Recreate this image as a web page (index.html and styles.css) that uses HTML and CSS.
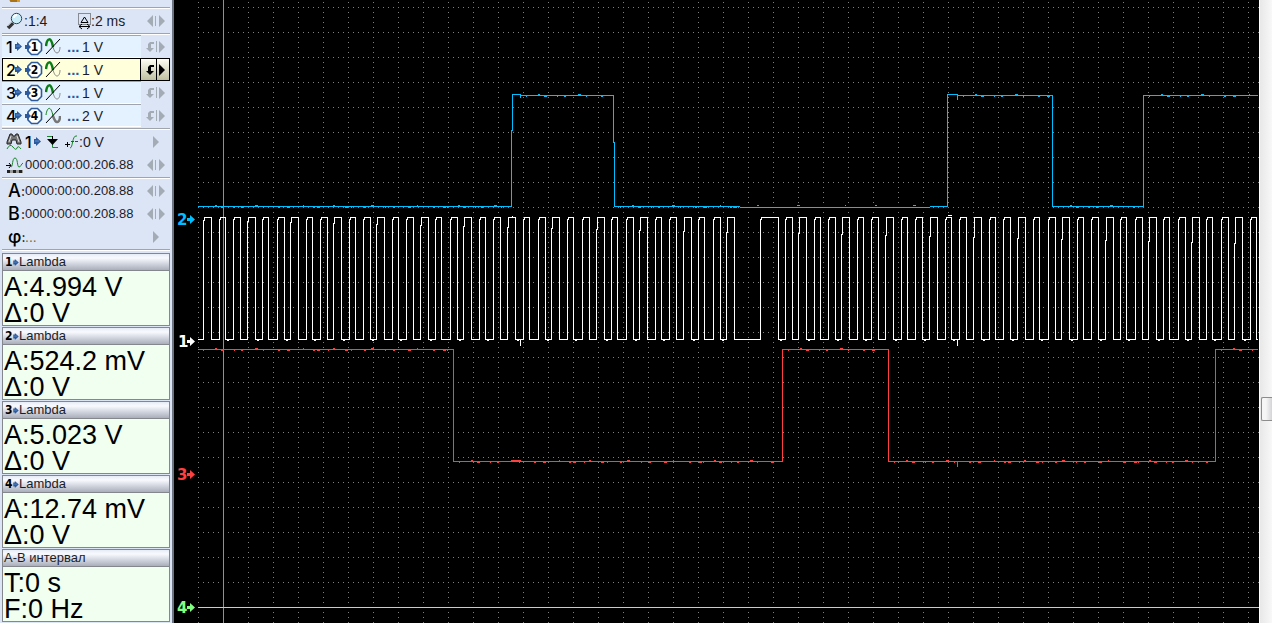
FILE: index.html
```html
<!DOCTYPE html>
<html lang="ru">
<head>
<meta charset="utf-8">
<title>Осциллограф</title>
<link rel="stylesheet" href="styles.css">
</head>
<body>
<svg class="defs" aria-hidden="true">
  <symbol id="arrow" viewBox="0 0 7 9"><path d="M0 2h2V0l5 4.500-5 4.500V7H0z" fill="#2c5a9c"/><path d="M1 4h4" stroke="#5d8fcf"/></symbol>
  <symbol id="octagon" viewBox="0 0 18 18"><path d="M6.500 1.500h6l4 4v7l-4 4h-6L3 13V5z" fill="#fff" stroke="#2c5a9c" stroke-width="1.600"/><path d="M0 7h2V5l4 4-4 4v-2H0z" fill="#2c5a9c"/></symbol>
  <symbol id="wave-top" viewBox="0 0 16 17"><path d="M8 9c1 3 2 6 4 6s3-3 3-6" fill="none" stroke="#8a8a8a"/><path d="M1 8c1-8 5-10 7 1" fill="none" stroke="#0a7d14" stroke-width="2.500"/><path d="M1 16L15 1" stroke="#000"/></symbol>
  <symbol id="wave-bottom" viewBox="0 0 16 17"><path d="M8 9c1 3 2 6 4 6s3-3 3-6" fill="none" stroke="#777" stroke-width="2.500"/><path d="M1 8c1-8 5-10 7 1" fill="none" stroke="#0a7d14"/><path d="M1 16L15 1" stroke="#000"/></symbol>
  <symbol id="pair" viewBox="0 0 20 12"><path d="M7 0v12L1 6zM13 0v12l6-6z" fill="#a3abb5"/><path d="M10 1v10" stroke="#a3abb5" stroke-width="2"/><path d="M10.500 1v10" stroke="#dce5f5"/></symbol>
  <symbol id="single" viewBox="0 0 20 12"><path d="M7 0v12l6-6z" fill="#a3abb5"/></symbol>
  <symbol id="drop" viewBox="0 0 8 12"><path d="M8 1v2H5v4h3l-4 4-4-4h2V3l2-2z" fill="currentColor"/></symbol>
  <symbol id="right" viewBox="0 0 7 12"><path d="M0 0v12l6-6z" fill="currentColor"/></symbol>
</svg>
<main class="app">
  <aside class="panel">
    <div class="strip"><svg width="14" height="3"><path d="M0 0h11v2H2z" fill="#d99b25"/><path d="M1 1h7" stroke="#7b4a08"/></svg></div>
    <hr>
    <div class="row">
      <svg width="18" height="18"><path d="M7 11L2 16" stroke="#333" stroke-width="3.500"/><path d="M6 10l-4 4" stroke="#aaa"/><circle cx="10.500" cy="6.500" r="5.200" fill="#c9eefa" stroke="#345" /><path d="M8 6c0-2 1-3 3-3" fill="none" stroke="#fff" stroke-width="2"/></svg>
      <span class="value scale">:1:4</span>
      <svg width="13" height="16"><rect x=".5" y=".5" width="12" height="11" fill="none" stroke="#333" stroke-dasharray="1 1"/><path d="M3 9.500h7L6.500 4z" fill="none" stroke="#000"/><path d="M1 13.500h11M4 11l-3 2.500L4 16M9 11l3 2.500L9 16" fill="none" stroke="#000"/></svg>
      <span class="value">:2 ms</span>
      <button class="step" aria-label="Развёртка"><svg width="20" height="12"><use href="#pair"/></svg></button>
    </div>
    <hr>
    <div class="channels">
      <div class="channel"><div class="info"><b>1</b><svg width="7" height="9"><use href="#arrow"/></svg><svg class="oct" width="18" height="18"><use href="#octagon"/><text x="9.500" y="13">1</text></svg><svg class="wave" width="16" height="17"><use href="#wave-top"/></svg><i>...</i><span class="value">1 V</span></div><button class="split" aria-label="Канал 1"><svg width="8" height="12"><use href="#drop"/></svg><span></span><svg width="7" height="12"><use href="#right"/></svg></button></div>
      <div class="channel selected"><div class="info"><b>2</b><svg width="7" height="9"><use href="#arrow"/></svg><svg class="oct" width="18" height="18"><use href="#octagon"/><text x="9.500" y="13">2</text></svg><svg class="wave" width="16" height="17"><use href="#wave-top"/></svg><i>...</i><span class="value">1 V</span></div><button class="split" aria-label="Канал 2"><svg width="8" height="12"><use href="#drop"/></svg><span></span><svg width="7" height="12"><use href="#right"/></svg></button></div>
      <div class="channel"><div class="info"><b>3</b><svg width="7" height="9"><use href="#arrow"/></svg><svg class="oct" width="18" height="18"><use href="#octagon"/><text x="9.500" y="13">3</text></svg><svg class="wave" width="16" height="17"><use href="#wave-top"/></svg><i>...</i><span class="value">1 V</span></div><button class="split" aria-label="Канал 3"><svg width="8" height="12"><use href="#drop"/></svg><span></span><svg width="7" height="12"><use href="#right"/></svg></button></div>
      <div class="channel"><div class="info"><b>4</b><svg width="7" height="9"><use href="#arrow"/></svg><svg class="oct" width="18" height="18"><use href="#octagon"/><text x="9.500" y="13">4</text></svg><svg class="wave" width="16" height="17"><use href="#wave-bottom"/></svg><i>...</i><span class="value">2 V</span></div><button class="split" aria-label="Канал 4"><svg width="8" height="12"><use href="#drop"/></svg><span></span><svg width="7" height="12"><use href="#right"/></svg></button></div>
    </div>
    <hr>
    <div class="row">
      <svg width="18" height="18"><path d="M4 1h2l1 2h2l1-2h2l3 8v2h-4l-1-4H6l-1 4H1V9z" fill="#777" stroke="#222"/><path d="M5 3L3 9M11 3l2 6" stroke="#ddd"/><path d="M1 16q3-6 6-2t4 1 4 1" fill="none" stroke="#18892a"/></svg>
      <b class="source">1</b><svg width="7" height="9"><use href="#arrow"/></svg>
      <svg class="edge" width="12" height="14"><path d="M0 1.500h5.500v11H11" fill="none" stroke="#18892a"/><path d="M0 4h11L5.500 10z" fill="#000"/><path d="M5.500 1v6" stroke="#000"/></svg>
      <svg class="level" width="14" height="16"><path d="M0 10.500h5M2.500 8v5" stroke="#000"/><path d="M5 14c3 0 2-12 6-12h1" fill="none" stroke="#18892a"/><path d="M6 7.500h8" stroke="#444" stroke-dasharray="3 1"/></svg>
      <span class="value">:0 V</span>
      <button class="step" aria-label="Уровень"><svg width="20" height="12"><use href="#single"/></svg></button>
    </div>
    <div class="row">
      <svg class="pos" width="18" height="18"><path d="M0 9.500h5M3 7l2 2.500L3 12" fill="none" stroke="#000"/><path d="M5 11c2 0 1-9 4-9s2 9 4 9 2-3 4-4" fill="none" stroke="#18892a"/><path d="M1 15.500h16" stroke="#999" stroke-width="3"/><path d="M1 15.500h16" stroke="#222" stroke-width="3" stroke-dasharray="3 3"/></svg>
      <span class="value time">0000:00:00.206.88</span>
      <button class="step" aria-label="Позиция"><svg width="20" height="12"><use href="#pair"/></svg></button>
    </div>
    <hr>
    <div class="row"><b class="name">A<small>:</small></b><span class="value time">0000:00:00.208.88</span><button class="step" aria-label="Курсор A"><svg width="20" height="12"><use href="#pair"/></svg></button></div>
    <div class="row"><b class="name">B<small>:</small></b><span class="value time">0000:00:00.208.88</span><button class="step" aria-label="Курсор B"><svg width="20" height="12"><use href="#pair"/></svg></button></div>
    <div class="row"><b class="name">φ<small>:</small></b><span class="value dots">...</span><button class="step" aria-label="Фаза"><svg width="20" height="12"><use href="#single"/></svg></button></div>
    <hr>
    <section class="card"><h2><b>1</b><svg width="6" height="7"><use href="#arrow"/></svg>Lambda</h2><p>A:4.994 V</p><p>Δ:0 V</p></section>
    <section class="card"><h2><b>2</b><svg width="6" height="7"><use href="#arrow"/></svg>Lambda</h2><p>A:524.2 mV</p><p>Δ:0 V</p></section>
    <section class="card"><h2><b>3</b><svg width="6" height="7"><use href="#arrow"/></svg>Lambda</h2><p>A:5.023 V</p><p>Δ:0 V</p></section>
    <section class="card"><h2><b>4</b><svg width="6" height="7"><use href="#arrow"/></svg>Lambda</h2><p>A:12.74 mV</p><p>Δ:0 V</p></section>
    <section class="card"><h2>А-В интервал</h2><p>T:0 s</p><p>F:0 Hz</p></section>
  </aside>
  <svg class="plot" viewBox="174 0 1085 623" preserveAspectRatio="xMinYMin slice">
    <defs>
      <pattern id="grid" x="198" y="7" width="25" height="25" patternUnits="userSpaceOnUse">
        <path d="M0 .5h1m4 0h1m4 0h1m4 0h1m4 0h1M0 5.500h1M0 10.500h1M0 15.500h1M0 20.500h1" stroke="#808080"/>
      </pattern>
    </defs>
    <rect x="198" y="0" width="1061" height="623" fill="url(#grid)"/>
    <g class="traces">
      <path d="M223.500 0V623" stroke="#a89c10"/>
      <path d="M223.500 0V623" stroke="#909090" stroke-dasharray="1 4" stroke-dashoffset="-2"/>
      <path id="ch1" stroke="#fff"/>
      <path id="ch2" stroke="#00bfff"/>
      <path id="ch3" stroke="#ff4040"/>
      <path d="M198 607.500H1259" stroke="#80ff80"/>
    </g>
    <g class="marker" fill="#00bfff"><text x="177" y="225">2</text><path d="M187 218h3v-3l5 4.500-5 4.500v-3h-3z"/></g>
    <g class="marker" fill="#fff"><text x="178" y="347">1</text><path d="M187 340h3v-3l5 4.500-5 4.500v-3h-3z"/></g>
    <g class="marker" fill="#ff4040"><text x="177" y="480">3</text><path d="M187 473h3v-3l5 4.500-5 4.500v-3h-3z"/></g>
    <g class="marker" fill="#80ff80"><text x="177" y="613">4</text><path d="M187 606h3v-3l5 4.500-5 4.500v-3h-3z"/></g>
  </svg>
  <div class="scroll"><div class="thumb"></div></div>
</main>
<script src="traces.js"></script>
</body>
</html>
```
FILE: styles.css
```css
* { box-sizing: border-box; }
body {
  margin: 0;
  background: #000;
  color: #000;
  font-family: "Liberation Sans", Arial, sans-serif;
}
svg { display: block; flex: none; overflow: visible; }
.defs { position: absolute; width: 0; height: 0; }
.app { display: flex; min-height: 100vh; }

.panel {
  flex: none;
  width: 174px;
  padding: 0 2px;
  background: #dce5f5;
  border-right: 2px solid #6e7684;
}
.strip { height: 7px; padding-left: 7px; }
hr {
  height: 2px;
  margin: 0;
  border: 0;
  border-top: 1px solid #a0a4ac;
  background: #fff;
}
.row + hr, .channels + hr { margin-top: 1px; }
.row { display: flex; align-items: center; height: 23px; padding-left: 4px; }
.value {
  font-size: 14px;
  line-height: 20px;
  color: #1c1c28;
  white-space: pre;
}
.time { font-size: 13px; }
.scale { width: 54px; }
button { margin: 0; padding: 0; border: 0; background: none; color: #a3abb5; }
.step { margin-left: auto; margin-right: 4px; }
.source { width: 9px; margin-left: 1px; font: 500 16px/20px Inter, sans-serif; }
.edge { margin-left: 6px; }
.level { margin-left: 6px; }
.pos { margin-right: 1px; }
.name {
  display: flex;
  justify-content: space-between;
  width: 19px;
  padding-left: 2px;
  font: 500 18px/20px Inter, sans-serif;
}
.name small { width: 4px; font-size: 13px; line-height: 20px; }
.dots { color: #7c6a35; }

.channel { display: flex; height: 23px; }
.info {
  display: flex;
  align-items: center;
  width: 139px;
  padding-left: 4px;
  border-top: 1px solid #a0a4ac;
  border-bottom: 1px solid #fff;
  background: #e4f2ff;
}
.info b { width: 9px; font: 500 16px/20px Inter, sans-serif; }
.oct { margin-left: 3px; }
.oct text { font: bold 12px "DejaVu Sans Condensed", "DejaVu Sans", sans-serif; text-anchor: middle; }
.wave { margin-left: 2px; }
.info i { width: 15px; margin-left: 6px; font: bold 15px/20px "Liberation Sans", sans-serif; color: #2c5a9c; }
.split { display: flex; align-items: center; gap: 2px; width: 29px; padding-left: 5px; }
.split span { width: 1px; height: 11px; background: currentColor; }
.selected .info { border: 1px solid #000; padding-left: 3px; background: #ffffdc; }
.selected .split {
  border: 1px solid #000;
  border-left-width: 0;
  color: #000;
  background: linear-gradient(#fffff4, #c0c0a0);
}
.selected .split span { height: 100%; }

.card {
  margin-bottom: 1px;
  width: 168px;
  height: 73px;
  border: 1px solid #84878c;
  background: #f0fff0;
}
hr + .card { margin-top: 2px; }
.card h2 {
  display: flex;
  align-items: center;
  height: 17px;
  margin: 0 0 3px;
  padding-left: 1px;
  border-bottom: 1px solid #84878c;
  background: linear-gradient(#e6ebf4, #f8faff 25%, #a8aebb);
  font-size: 13px;
  font-weight: normal;
  line-height: 16px;
  color: #1c1c28;
}
.card h2 b { width: 9px; padding-left: 1px; font: bold 12px/16px "DejaVu Sans Condensed", "DejaVu Sans", sans-serif; color: #000; }
.card p { margin: 0; padding-left: 1px; font-size: 27px; line-height: 26px; white-space: nowrap; }

.plot { flex: 1; min-width: 0; height: 100vh; overflow: hidden; }
.traces path { fill: none; shape-rendering: crispEdges; }
.marker text { font: bold 15px "DejaVu Sans", sans-serif; }
.scroll {
  flex: none;
  width: 13px;
  padding: 397px 0 0 1px;
  border-left: 1px solid #fff;
  background: linear-gradient(90deg, #e8e8e8, #f8f8f8);
}
.thumb {
  height: 24px;
  border: 1px solid #8c8c8c;
  border-right: 0;
  border-radius: 2px 0 0 2px;
  background: linear-gradient(90deg, #f6f6f6 40%, #d4d4d8);
}
```
FILE: traces.js
```javascript
// Left edges of the channel 1 pulses
const rises = [
  204, 219, 233, 248, 262, 277, 291, 306, 320, 334, 349, 363, 377, 392, 406, 421, 435,
  450, 464, 479, 493, 508, 523, 538, 552, 567, 582, 597, 611, 626, 640, 655, 669, 684,
  698, 713, 727, 760, 785, 799, 814, 828, 842, 857, 871, 886, 901, 915, 930, 945, 959,
  974, 989, 1003, 1018, 1033, 1048, 1062, 1077, 1091, 1106, 1120, 1135, 1149, 1163,
  1178, 1192, 1206, 1221, 1235, 1250
];
let square = "M198 339.5";
rises.forEach((x, i) => {
  const width = x === 760 ? 18 : i % 3 === 1 ? 6 : 7;
  const knee = 220 + (i * 37) % 110;
  if (i % 3 === 0) {
    square += `H${x - 0.5}V${knee}H${x + 0.5}V217.5`;
  } else {
    square += `H${x + 0.5}V219.5h1V217.5`;
  }
  square += `H${x + width + 0.5}V339.5`;
  if (i % 2) square += "h2v1h1v-1";
});
square += "H1258M520.500 339V346M957.500 339V346M512 215.500v2M948 215.500h4";
document.getElementById("ch1").setAttribute("d", square);

// Small level ticks along a flat part of a trace
function ticks(from, to, y) {
  let d = "";
  for (let x = from + 5, k = 3; x < to - 4; x += 4 + (k * 7) % 13, k++) {
    d += `M${x} ${y + (k % 4 ? 1 : -1)}h${1 + (k % 3)}`;
  }
  return d;
}
document.getElementById("ch2").setAttribute("d",
  "M198 206.5H511.500V130.500H512.500V94.500H520.500V98M521 95.500H613.500V142H614.500V207M614 206.500H740M740 207.500H930M930 206.500H947.500V94.500H957.500V100M957 95.500H1052.500V206.500H1143.500V95.500H1258" +
  ticks(198, 511, 206.5) + ticks(521, 613, 95.5) + ticks(615, 740, 206.5) + ticks(740, 930, 206.5) +
  ticks(958, 1052, 95.5) + ticks(1053, 1143, 206.5) + ticks(1144, 1258, 95.5));
document.getElementById("ch3").setAttribute("d",
  "M198 349.500H453.500V461.500H782.500V349.500H888.500V461.500H1215.500V349.500H1258M957.500 461V467M512 460.500h9" +
  ticks(198, 453, 349.5) + ticks(454, 782, 461.5) + ticks(783, 888, 349.5) +
  ticks(889, 1215, 461.5) + ticks(1216, 1258, 349.5));
```
